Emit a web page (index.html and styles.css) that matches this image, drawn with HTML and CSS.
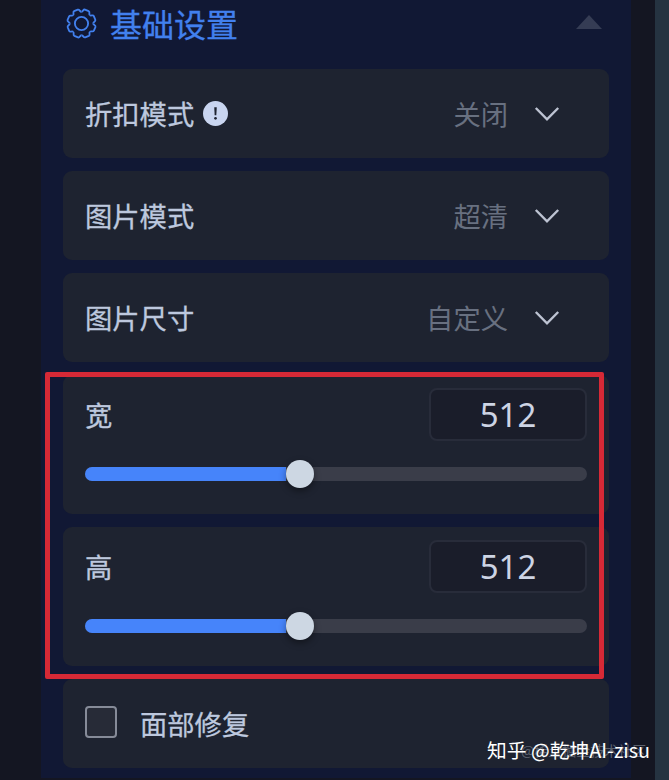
FILE: index.html
```html
<!DOCTYPE html>
<html lang="zh-CN">
<head>
  <meta charset="UTF-8" />
  <meta name="viewport" content="width=device-width, initial-scale=1.0"/>
  <title>基础设置</title>
  <link rel="stylesheet" href="styles.css">
</head>
<body>
  <main class="panel">
    <header>
      <svg class="gear" viewBox="0 0 30 30">
        <path id="tooth" d="M15 3.6 C16.7 3.6 16.5 0.9 18.4 1.5 L21.9 3 C23.7 3.9 21.7 5.7 23.06 6.94"/>
        <use href="#tooth" transform="rotate(45 15 15)"/>
        <use href="#tooth" transform="rotate(90 15 15)"/>
        <use href="#tooth" transform="rotate(135 15 15)"/>
        <use href="#tooth" transform="rotate(180 15 15)"/>
        <use href="#tooth" transform="rotate(225 15 15)"/>
        <use href="#tooth" transform="rotate(270 15 15)"/>
        <use href="#tooth" transform="rotate(315 15 15)"/>
        <circle cx="15" cy="15" r="6.4"/>
      </svg>
      <h1>基础设置</h1>
      <span class="collapse"></span>
    </header>

    <section class="card select-row">
      <span class="label">折扣模式</span>
      <svg class="info" viewBox="0 0 24 24">
        <circle cx="12" cy="12" r="12"/>
        <path d="M10.8 6h2.4l-.4 7.6h-1.6z"/>
        <circle class="dot" cx="12" cy="16.6" r="1.3"/>
      </svg>
      <span class="value">关闭</span>
      <svg class="chevron" viewBox="0 0 26 16"><path d="M1.8 2 L13 13.4 L24.2 2"/></svg>
    </section>

    <section class="card select-row">
      <span class="label">图片模式</span>
      <span class="value">超清</span>
      <svg class="chevron" viewBox="0 0 26 16"><path d="M1.8 2 L13 13.4 L24.2 2"/></svg>
    </section>

    <section class="card select-row">
      <span class="label">图片尺寸</span>
      <span class="value">自定义</span>
      <svg class="chevron" viewBox="0 0 26 16"><path d="M1.8 2 L13 13.4 L24.2 2"/></svg>
    </section>

    <section class="card slider-card">
      <div class="slider-head">
        <span class="label">宽</span>
        <span class="number">512</span>
      </div>
      <div class="track"><div class="fill"></div><div class="thumb"></div></div>
    </section>

    <section class="card slider-card">
      <div class="slider-head">
        <span class="label">高</span>
        <span class="number">512</span>
      </div>
      <div class="track"><div class="fill"></div><div class="thumb"></div></div>
    </section>

    <section class="card check-row">
      <span class="checkbox"></span>
      <span class="label">面部修复</span>
    </section>
  </main>
  <aside class="strip"></aside>

  <div class="highlight"></div>
  <div class="watermark faint">@稀土掘金技术社区</div>
  <div class="watermark">知乎 @乾坤AI-zisu</div>
</body>
</html>
```

FILE: styles.css
```css
* {
  box-sizing: border-box;
}
body {
  position: relative;
  display: flex;
  justify-content: space-between;
  width: 669px;
  height: 780px;
  margin: 0;
  padding-left: 41px;
  overflow: hidden;
  background: #141622;
  font-family: "Noto Sans CJK SC", sans-serif;
}
.panel {
  display: flex;
  flex-direction: column;
  gap: 13px;
  width: 590px;
  height: 778px;
  padding: 0 22px;
  background: #111834;
}
.strip {
  width: 14px;
  background: #253341;
}
header {
  display: flex;
  align-items: center;
  height: 56px;
  padding: 0 7px 9px 3px;
}
.gear {
  width: 31px;
  height: 31px;
  fill: none;
  stroke: #4280ee;
  stroke-width: 1.8;
}
h1 {
  margin: 0 0 2px 13px;
  color: #4280ee;
  font-size: 32px;
  font-weight: 400;
  line-height: 46px;
  -webkit-text-stroke: 0.3px #4280ee;
}
.collapse {
  margin-left: auto;
  margin-bottom: 3px;
  border: 13px solid transparent;
  border-top: 0;
  border-bottom: 14px solid #353c54;
}
.card {
  flex: none;
  width: 546px;
  height: 89px;
  padding: 0 22px;
  border-radius: 9px;
  background: #1e2330;
}
.select-row,
.check-row {
  display: flex;
  align-items: center;
}
.label {
  padding-bottom: 2px;
  color: #bdc8de;
  font-size: 27.3px;
  line-height: 40px;
  -webkit-text-stroke: 0.3px #bdc8de;
}
.info {
  width: 25px;
  height: 25px;
  margin-left: 9px;
  fill: #c9d5f0;
}
.info path,
.info .dot {
  fill: #1e2330;
}
.value {
  margin-left: auto;
  padding-bottom: 2px;
  color: #687080;
  font-size: 27.3px;
  line-height: 40px;
}
.chevron {
  width: 26px;
  height: 16px;
  margin: 0 27px 0 26px;
  fill: none;
  stroke: #bdc3d2;
  stroke-width: 2.4;
}
.slider-card {
  height: 139px;
  padding-top: 13px;
}
.slider-head {
  display: flex;
  justify-content: space-between;
  align-items: center;
}
.number {
  width: 158px;
  height: 53px;
  border: 2px solid #282c3a;
  border-radius: 8px;
  background: #1a1d2a;
  color: #cdd4e4;
  font-family: "Noto Sans", sans-serif;
  font-size: 33px;
  line-height: 50px;
  text-align: center;
}
.track {
  display: flex;
  align-items: center;
  height: 14px;
  margin-top: 26px;
  border-radius: 7px;
  background: #3a3d49;
}
.fill {
  width: 201px;
  height: 14px;
  border-radius: 7px 0 0 7px;
  background: #4684fa;
}
.thumb {
  width: 28px;
  height: 28px;
  border-radius: 50%;
  background: #cdd7e3;
  box-shadow: 0 3px 7px rgba(0, 0, 0, 0.4);
}
.checkbox {
  width: 32px;
  height: 32px;
  margin-right: 23px;
  margin-bottom: 3px;
  border: 2px solid #868b98;
  border-radius: 4px;
  background: #272b37;
}
.highlight {
  position: absolute;
  left: 45px;
  top: 372px;
  width: 559px;
  height: 307px;
  border: 5px solid #d62936;
  border-radius: 2px;
}
.watermark {
  position: absolute;
  left: 487px;
  top: 737px;
  color: #fff;
  font-size: 19.8px;
  line-height: 26px;
  white-space: nowrap;
}
.faint {
  left: 521px;
  color: #5b606c;
  font-size: 14px;
}
```
